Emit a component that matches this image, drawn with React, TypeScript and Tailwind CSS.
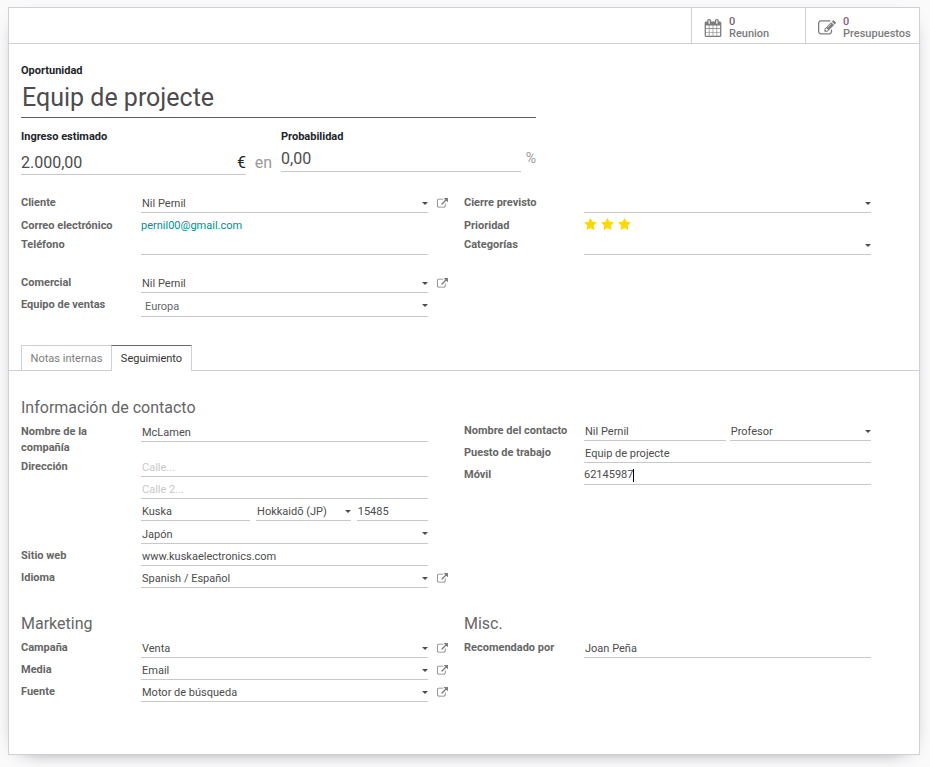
import { useId, type ReactNode } from "react";

const CALENDAR =
  "M192 1664h288v-288h-288v288zm352 0h320v-288h-320v288zm-352-352h288v-320h-288v320zm352 0h320v-320h-320v320zm-352-384h288v-288h-288v288zm736 736h320v-288h-320v288zm-384-736h320v-288h-320v288zm768 736h288v-288h-288v288zm-384-352h320v-320h-320v320zm-352-864v-288q0-13-9.5-22.5t-22.5-9.5h-64q-13 0-22.5 9.5t-9.5 22.5v288q0 13 9.5 22.5t22.5 9.5h64q13 0 22.5-9.5t9.5-22.5zm736 864h288v-320h-288v320zm-384-384h320v-288h-320v288zm384 0h288v-288h-288v288zm32-480v-288q0-13-9.5-22.5t-22.5-9.5h-64q-13 0-22.5 9.5t-9.5 22.5v288q0 13 9.5 22.5t22.5 9.5h64q13 0 22.5-9.5t9.5-22.5zm384-64v1280q0 52-38 90t-90 38h-1408q-52 0-90-38t-38-90v-1280q0-52 38-90t90-38h128v-96q0-66 47-113t113-47h64q66 0 113 47t47 113v96h384v-96q0-66 47-113t113-47h64q66 0 113 47t47 113v96h128q52 0 90 38t38 90z";
const EDIT =
  "M888 1184l116-116-152-152-116 116v56h96v96h56zm440-720q-16-16-33 1l-350 350q-17 17-1 33t33-1l350-350q17-17 1-33zm80 594v190q0 119-84.5 203.5t-203.5 84.5h-832q-119 0-203.5-84.5t-84.5-203.5v-832q0-119 84.5-203.5t203.5-84.5h832q63 0 117 25 15 7 18 23 3 17-9 29l-49 49q-14 14-32 8-23-6-45-6h-832q-66 0-113 47t-47 113v832q0 66 47 113t113 47h832q66 0 113-47t47-113v-126q0-13 9-22l64-64q15-15 35-7t20 29zm-96-738l288 288-672 672h-288v-288zm444 132l-92 92-288-288 92-92q28-28 68-28t68 28l152 152q28 28 28 68t-28 68z";
const EXTERNAL =
  "M1408 928v320q0 119-84.5 203.5t-203.5 84.5h-832q-119 0-203.5-84.5t-84.5-203.5v-832q0-119 84.5-203.5t203.5-84.5h704q14 0 23 9t9 23v64q0 14-9 23t-23 9h-704q-66 0-113 47t-47 113v832q0 66 47 113t113 47h832q66 0 113-47t47-113v-320q0-14 9-23t23-9h64q14 0 23 9t9 23zm384-864v512q0 26-19 45t-45 19-45-19l-176-176-652 652q-10 10-23 10t-23-10l-114-114q-10-10-10-23t10-23l652-652-176-176q-19-19-19-45t19-45 45-19h512q26 0 45 19t19 45z";
const STAR =
  "M1728 647q0 22-26 48l-363 354 86 500q1 7 1 20 0 21-10.5 35.5t-30.5 14.5q-19 0-40-12l-449-236-449 236q-22 12-40 12-21 0-31.5-14.5t-10.5-35.5q0-6 2-20l86-500-364-354q-25-27-25-48 0-37 56-46l502-73 225-455q19-41 49-41t49 41l225 455 502 73q56 9 56 46z";

function Icon({ path, className }: { path: string; className: string }) {
  return (
    <svg viewBox="0 0 1792 1792" fill="currentColor" aria-hidden="true" className={className}>
      <path d={path} />
    </svg>
  );
}

const line = "border-b border-[#c8c8c8] bg-transparent outline-none rounded-none";

function Text({ id, value, placeholder, label }: { id?: string; value?: string; placeholder?: string; label?: string }) {
  return (
    <input
      id={id}
      aria-label={label}
      defaultValue={value}
      placeholder={placeholder}
      className={`${line} h-[22px] w-full min-w-0 pt-1 pl-px placeholder:text-[#c8c8c8]`}
    />
  );
}

function Select({ id, value, label, size = "h-[22px] pl-px" }: { id?: string; value: string; label?: string; size?: string }) {
  return (
    <span className="relative block w-full min-w-0">
      <select id={id} aria-label={label} defaultValue={value} className={`${line} ${size} block w-full appearance-none pt-1 pr-3 leading-[13px]`}>
        <option>{value}</option>
      </select>
      <svg viewBox="0 0 6 3" aria-hidden="true" className="pointer-events-none absolute top-[11px] right-0 h-[3px] w-1.5 fill-[#4c4c4c]">
        <path d="M0 0h6L3 3z" />
      </svg>
    </span>
  );
}

function Field({
  label,
  open,
  children,
}: {
  label: string;
  open?: boolean;
  children: (id: string) => ReactNode;
}) {
  const id = useId();
  return (
    <div className="flex">
      <label htmlFor={id} className="-mb-px w-[120px] shrink-0 pt-1 pr-4 leading-4 font-bold text-[#666]">
        {label}
      </label>
      <div className="min-w-0 flex-1">{children(id)}</div>
      <div className="w-9 shrink-0 pt-[7px] pl-[9px]">
        {open && (
          <button type="button" aria-label={`Abrir ${label}`} className="block text-[#7c7c7c]">
            <Icon path={EXTERNAL} className="size-[11px]" />
          </button>
        )}
      </div>
    </div>
  );
}

function Stat({ icon, count, name }: { icon: string; count: string; name: string }) {
  return (
    <button
      type="button"
      className="flex h-[35px] w-[114px] items-center gap-[7px] border-l border-[#ced0d8] pt-1 pl-3 text-left font-medium text-[#7c7c7c]"
    >
      <Icon path={icon} className="size-[18px] shrink-0 text-[#7c7c7c]" />
      <span className="leading-3">
        <span className="block text-[#875a7b]">{count}</span>
        <span className="block">{name}</span>
      </span>
    </button>
  );
}

function Heading({ children }: { children: ReactNode }) {
  return <h2 className="mb-0.5 text-base leading-5 text-[#666]">{children}</h2>;
}

export default function App() {
  return (
    <div className="min-h-screen bg-[#fafafa] pt-[7px] pr-2.5 pb-3 pl-2 font-[Roboto,sans-serif] text-[11px] text-[#4c4c4c]">
      <form className="border border-[#ced0d8] bg-white pb-[52px] shadow-[0_5px_20px_-15px_black]">
        <div className="flex justify-end border-b border-[#ced0d8]">
          <Stat icon={CALENDAR} count="0" name="Reunion" />
          <Stat icon={EDIT} count="0" name="Presupuestos" />
        </div>

        <header className="px-3 pt-[19px]">
          <div className="w-full max-w-[515px]">
            <label htmlFor="name" className="block leading-4 font-bold text-[#212529]">
              Oportunidad
            </label>
            <input
              id="name"
              defaultValue="Equip de projecte"
              className="block h-[39px] w-full border-b border-[#5f5f5f] bg-transparent pb-0.5 pl-px text-[25px] outline-none"
            />
            <div className="mt-[11px] flex text-base">
              <div className="w-[225px]">
                <label htmlFor="revenue" className="block text-[11px] leading-4 font-bold text-[#212529]">
                  Ingreso estimado
                </label>
                <div className="flex h-[30px] items-center border-b border-[#c8c8c8] pt-[7px]">
                  <input id="revenue" defaultValue="2.000,00" className="min-w-0 flex-1 outline-none" />
                  <span className="text-[#212529]">€</span>
                </div>
              </div>
              <span className="w-[35px] pt-[22px] text-center text-[#999]">en</span>
              <div className="min-w-0 flex-1">
                <label htmlFor="probability" className="block text-[11px] leading-4 font-bold text-[#212529]">
                  Probabilidad
                </label>
                <div className="flex">
                  <input
                    id="probability"
                    defaultValue="0,00"
                    className="h-[27px] min-w-0 flex-1 border-b border-[#c8c8c8] outline-none"
                  />
                  <span className="w-[15px] pt-[3px] text-right text-sm text-[#999]">%</span>
                </div>
              </div>
            </div>
          </div>
        </header>

        <div className="mt-4 grid grid-cols-2 px-3">
          <div>
            <Field label="Cliente" open>{(id) => <Select id={id} value="Nil Pernil" />}</Field>
            <div className="flex h-5 pt-[5px] leading-4">
              <span className="w-[120px] font-bold text-[#666]">Correo electrónico</span>
              <a href="mailto:pernil00@gmail.com" className="text-[#008f8c]">
                pernil00@gmail.com
              </a>
            </div>
            <Field label="Teléfono">{(id) => <Text id={id} />}</Field>
          </div>
          <div>
            <Field label="Cierre previsto">{(id) => <Select id={id} value="" />}</Field>
            <div className="flex h-5 pt-[5px] leading-4">
              <span className="w-[120px] font-bold text-[#666]">Prioridad</span>
              <span className="flex h-[13px] gap-1 text-[#ffd700]">
                {["Media", "Alta", "Muy alta"].map((name) => (
                  <button key={name} type="button" aria-label={name}>
                    <Icon path={STAR} className="size-[13px]" />
                  </button>
                ))}
              </span>
            </div>
            <Field label="Categorías">{(id) => <Select id={id} value="" />}</Field>
          </div>
          <div className="mt-4">
            <Field label="Comercial" open>{(id) => <Select id={id} value="Nil Pernil" />}</Field>
            <Field label="Equipo de ventas">
              {(id) => <Select id={id} value="Europa" size="h-6 pl-1 text-[#666]" />}
            </Field>
          </div>
        </div>

        <div role="tablist" className="mt-7 flex border-b border-[#ced0d8] px-3">
          <button type="button" role="tab" aria-selected="false" className="h-[25px] w-[90px] border-t border-l border-[#ced0d8] pt-0.5 text-[#7c7c7c]">
            Notas internas
          </button>
          <button
            type="button"
            role="tab"
            aria-selected="true"
            className="-mb-px h-[26px] w-[81px] border-x border-t border-[#ced0d8] border-t-[#875a7b] bg-white pt-px text-[#333]"
          >
            Seguimiento
          </button>
        </div>

        <div className="grid grid-cols-2 gap-y-[26px] px-3 pt-[27px]">
          <section>
            <Heading>Información de contacto</Heading>
            <Field label="Nombre de la compañía">{(id) => <Text id={id} value="McLamen" />}</Field>
            <Field label="Dirección">
              {(id) => (
                <>
                  <Text id={id} placeholder="Calle..." />
                  <Text label="Calle 2" placeholder="Calle 2..." />
                  <div className="flex gap-1.5">
                    <div className="w-[38%]">
                      <Text label="Ciudad" value="Kuska" />
                    </div>
                    <div className="w-[33%]">
                      <Select label="Provincia" value="Hokkaidō (JP)" />
                    </div>
                    <div className="min-w-0 flex-1">
                      <Text label="Código postal" value="15485" />
                    </div>
                  </div>
                  <Select label="País" value="Japón" size="h-[23px] pl-px" />
                </>
              )}
            </Field>
            <Field label="Sitio web">{(id) => <Text id={id} value="www.kuskaelectronics.com" />}</Field>
            <Field label="Idioma" open>{(id) => <Select id={id} value="Spanish / Español" />}</Field>
          </section>
          <section className="pt-[21px]">
            <Field label="Nombre del contacto">
              {(id) => (
                <div className="flex gap-1">
                  <Text id={id} value="Nil Pernil" />
                  <Select label="Título" value="Profesor" />
                </div>
              )}
            </Field>
            <Field label="Puesto de trabajo">{(id) => <Text id={id} value="Equip de projecte" />}</Field>
            <Field label="Móvil">
              {(id) => (
                <div className={`${line} flex h-[22px] items-center pt-1`}>
                  <input id={id} defaultValue="62145987" className="max-w-full [field-sizing:content] caret-transparent outline-none" />
                  <span className="h-[13px] w-px bg-black" />
                </div>
              )}
            </Field>
          </section>
          <section>
            <Heading>Marketing</Heading>
            <Field label="Campaña" open>{(id) => <Select id={id} value="Venta" />}</Field>
            <Field label="Media" open>{(id) => <Select id={id} value="Email" />}</Field>
            <Field label="Fuente" open>{(id) => <Select id={id} value="Motor de búsqueda" />}</Field>
          </section>
          <section>
            <Heading>Misc.</Heading>
            <Field label="Recomendado por">{(id) => <Text id={id} value="Joan Peña" />}</Field>
          </section>
        </div>
      </form>
    </div>
  );
}
